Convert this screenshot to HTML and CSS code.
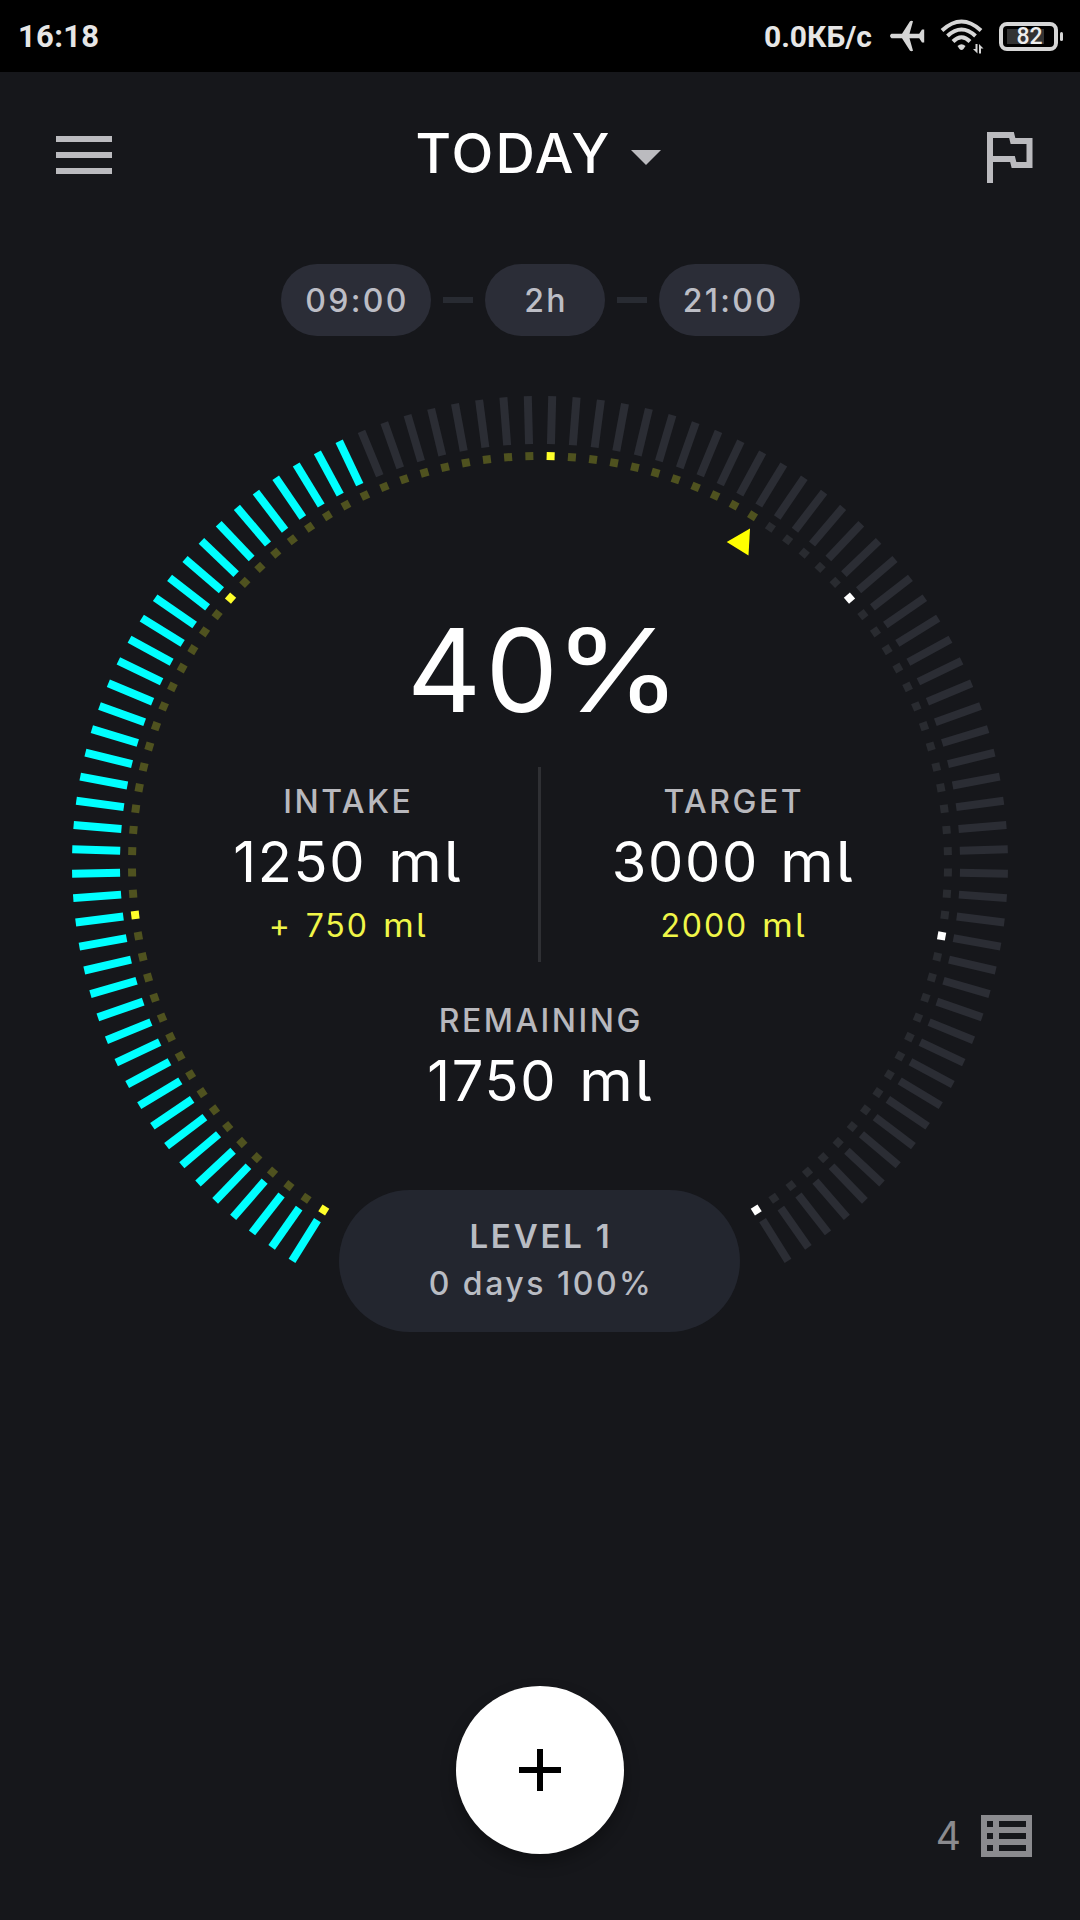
FILE: index.html
```html
<!DOCTYPE html>
<html lang="en">
<head>
<meta charset="utf-8">
<title>Today</title>
<link rel="stylesheet" href="styles.css">
</head>
<body>
<header class="status">
  <span class="clock">16:18</span>
  <div class="status-right">
    <span class="speed">0.0КБ/с</span>
    <svg class="plane" width="36" height="32" viewBox="0 0 36 32"><path d="M2.500 13.800H13L21 1.200Q22.500 0.500 24 1.200L20.500 13.800H30.200L33 9.500H35.200V22.500H33L30.200 18.200H20.500L24 30.800Q22.500 31.500 21 30.800L13 18.200H2.500Q-0.500 16 2.500 13.800Z"/></svg>
    <svg class="wifi" width="44" height="36" viewBox="0 0 44 36">
      <g class="waves"><path d="M2 11.500Q21.500 -6.500 41 11.500"/><path d="M7.500 17Q21.500 4 35.500 17"/><path d="M13 22.500Q21.500 14 30 22.500"/></g>
      <path d="M17.500 27Q21.500 23.500 25.500 27L23.500 30Q21.500 32 19.500 30Z"/>
      <path d="M35.500 25H37.500V34.500L33 30H35.500ZM39 34.500V25L43.500 29.500H41V34.500Z"/>
    </svg>
    <div class="battery"><span class="battery-body"><span class="battery-text">82</span></span><span class="battery-tip"></span></div>
  </div>
</header>
<nav class="topbar">
  <div class="menu"><i></i><i></i><i></i></div>
  <div class="title"><span class="title-text">TODAY</span><svg width="30" height="15" viewBox="0 0 30 15"><path d="M0 0H30L15 15Z"/></svg></div>
  <svg class="flag" width="46" height="52" viewBox="0 0 46 52"><path d="M3 51V3H24.500L26 9H42.500V33H27L25.500 27H3"/></svg>
</nav>
<div class="schedule">
  <span class="pill pill-start"><b>09:00</b></span><i></i>
  <span class="pill pill-step"><b>2h</b></span><i></i>
  <span class="pill pill-end"><b>21:00</b></span>
</div>
<main class="gauge">
  <svg class="dial" width="1080" height="984" viewBox="0 0 1080 984">
    <g id="ticks"></g>
    <path class="pointer" d="M726.700 162L750 148.500L748.500 175.500Z"/>
  </svg>
  <div class="readout">
    <div class="percent">40<span class="sign">%</span></div>
    <div class="columns">
      <section class="col intake">
        <h2>INTAKE</h2>
        <p class="amount">1250 <span class="unit">ml</span></p>
        <p class="extra">+ 750 <span class="unit">ml</span></p>
      </section>
      <section class="col target">
        <h2>TARGET</h2>
        <p class="amount">3000 <span class="unit">ml</span></p>
        <p class="extra">2000 <span class="unit">ml</span></p>
      </section>
    </div>
    <section class="col remaining">
      <h2>REMAINING</h2>
      <p class="amount">1750 <span class="unit">ml</span></p>
    </section>
    <div class="level">
      <span class="level-name">LEVEL 1</span>
      <span class="level-days">0 days 100%</span>
    </div>
  </div>
</main>
<footer class="footer">
  <button class="add" aria-label="Add"><svg width="42" height="42" viewBox="0 0 42 42"><path d="M21 0V42M0 21H42"/></svg></button>
  <div class="entries"><span class="count">4</span>
    <svg width="51" height="42" viewBox="0 0 51 42"><path fill-rule="evenodd" d="M0 0H51V42H0ZM6 6V12H12V6ZM18 6V12H45V6ZM6 18V24H12V18ZM18 18V24H45V18ZM6 30V36H12V30ZM18 30V36H45V30Z"/></svg>
  </div>
</footer>
<script src="dial.js"></script>
</body>
</html>
```
FILE: styles.css
```css
* { box-sizing: border-box; margin: 0; padding: 0; }
body {
  width: 1080px; height: 1920px; overflow: hidden;
  display: flex; flex-direction: column;
  background: #16171b; color: #fff;
  font-family: Inter, "Liberation Sans", sans-serif;
  font-feature-settings: "cv05";
}
svg { display: block; flex: none; }

/* Status bar */
.status {
  height: 72px; background: #000; color: #e6e6e6;
  display: flex; justify-content: space-between; align-items: center;
  padding: 0 17px 0 18px;
  font-family: Roboto, sans-serif; font-weight: 700;
}
.clock { font-size: 31px; line-height: 36px; padding-top: 1px; letter-spacing: .3px; }
.status-right { display: flex; align-items: center; }
.speed { font-size: 30px; line-height: 36px; margin-right: 17px; padding-top: 1px; }
.plane { fill: #d6d6d6; margin-right: 15px; }
.wifi { fill: #d6d6d6; margin: 2px 15px 0 0; }
.waves { fill: none; stroke: #d6d6d6; stroke-width: 4; }
.battery { display: flex; align-items: center; gap: 2px; }
.battery-body {
  width: 59px; height: 29px; border: 4px solid #d6d6d6; border-radius: 8px;
  display: flex; align-items: center; justify-content: center;
  background: linear-gradient(#333, #333) 4px center / 37px 15px no-repeat;
}
.battery-text { font-size: 23px; font-weight: 500; color: #eee; padding: 1px 0 0 2px; }
.battery-tip { width: 3px; height: 9px; border-radius: 2px; background: #d6d6d6; }

/* Top bar */
.topbar {
  height: 192px; padding: 60px 47px 0 56px;
  display: grid; grid-template-columns: 1fr auto 1fr; align-items: start;
}
.menu { width: 56px; padding-top: 4px; display: flex; flex-direction: column; gap: 10px; }
.menu i { height: 6px; background: #bbbbbf; }
.title { display: flex; align-items: flex-start; gap: 19px; margin-right: 13px; }
.title-text { font-size: 54.5px; font-weight: 500; line-height: 42px; letter-spacing: 2.1px; }
.title svg { fill: #bbbbbf; margin-top: 18px; }
.flag { justify-self: end; fill: none; stroke: #bbbbbf; stroke-width: 6; }

/* Reminder schedule */
.schedule { height: 72px; display: flex; align-items: center; padding-left: 281px; gap: 12px; }
.schedule i { width: 30px; height: 6px; background: #282b32; }
.pill { height: 72px; border-radius: 36px; background: #2b2d37; display: flex; align-items: center; justify-content: center; }
.pill b { font-size: 32px; font-weight: 500; color: #bcbdc5; letter-spacing: 2.3px; margin-right: -2px; }
.pill-start { width: 150px; }
.pill-step { width: 120px; }
.pill-end { width: 141px; }

/* Gauge */
.gauge { display: grid; margin-top: 44px; height: 984px; }
.dial, .readout { grid-area: 1 / 1; }
.tick { fill: #2b2d34; }
.tick-full { fill: #00ffff; }
.dot { fill: #292b30; }
.dot-past { fill: #4f521f; }
.dot-hour { fill: #fff; }
.dot-hour-past { fill: #ffff2a; }
.pointer { fill: #ffff00; }
.readout { display: flex; flex-direction: column; align-items: center; padding-top: 231px; }
.percent { font-size: 115px; line-height: 120px; height: 156px; font-weight: 400; letter-spacing: 4px; margin-right: 6px; }
.sign { display: inline-block; margin-left: -8px; letter-spacing: 0; transform: scaleX(1.13); transform-origin: left; }
.columns { display: flex; height: 195px; }
.col { display: flex; flex-direction: column; align-items: center; white-space: pre; }
.intake, .target { padding-top: 15px; }
.intake { width: 386px; border-right: 3px solid #2f3034; padding-left: 3px; }
.target { width: 385px; }
.col h2 { font-size: 32px; line-height: 40px; font-weight: 500; color: #b8b8bd; letter-spacing: 2.5px; margin-right: -1.5px; }
.unit { display: inline-block; transform: scaleX(1.1); transform-origin: left; }
.amount { font-size: 56px; line-height: 80px; letter-spacing: 1.7px; word-spacing: 4px; margin-right: 6px; }
.extra { font-size: 32px; line-height: 48px; color: #f0f648; letter-spacing: 1.9px; word-spacing: 3px; margin-right: 3px; }
.remaining { margin-top: 39px; }
.level {
  width: 401px; height: 142px; margin-top: 69px; margin-right: 1px; border-radius: 71px; background: #23262f; color: #b9bcc3;
  display: flex; flex-direction: column; align-items: center; padding-top: 22px;
}
.level-name { font-size: 33px; line-height: 48px; font-weight: 600; letter-spacing: 2.8px; margin-right: -3px; }
.level-days { font-size: 32px; line-height: 48px; font-weight: 500; letter-spacing: 2.5px; margin-right: -3px; }

/* Footer */
.footer { height: 234px; margin-top: auto; display: grid; grid-template-columns: 1fr auto 1fr; }
.add {
  grid-column: 2; width: 168px; height: 168px; border: 0; border-radius: 50%; background: #fff;
  display: flex; align-items: center; justify-content: center;
  box-shadow: 0 8px 16px rgba(0, 0, 0, .3);
}
.add path { stroke: #000; stroke-width: 6; }
.entries { justify-self: end; display: flex; gap: 20px; align-items: center; height: 42px; margin: 129px 48px 0 0; color: #8b8b8f; }
.entries svg { fill: #8b8b8f; }
.count { font-size: 39px; font-weight: 400; line-height: 40px; }
```
FILE: dial.js
```js
const NS = "http://www.w3.org/2000/svg";
const COUNT = 100, SWEEP = 296, CX = 540, CY = 484;
const FILLED = 42, ELAPSED = 61;
const HOURS = [0, 17, 33, 50, 66, 83, 99];
const group = document.getElementById("ticks");

function bar(angle, radius, length, name) {
  const r = document.createElementNS(NS, "rect");
  r.setAttribute("x", CX - 4);
  r.setAttribute("y", CY - radius);
  r.setAttribute("width", 8);
  r.setAttribute("height", length);
  r.setAttribute("class", name);
  r.setAttribute("transform", `rotate(${angle} ${CX} ${CY})`);
  group.appendChild(r);
}

for (let i = 0; i < COUNT; i++) {
  const angle = -SWEEP / 2 + i * SWEEP / (COUNT - 1);
  bar(angle, 468, 48, i < FILLED ? "tick tick-full" : "tick");
  const past = i < ELAPSED;
  const hour = HOURS.includes(i);
  bar(angle, 412, 8, hour ? (past ? "dot-hour-past" : "dot-hour") : (past ? "dot-past" : "dot"));
}
```
